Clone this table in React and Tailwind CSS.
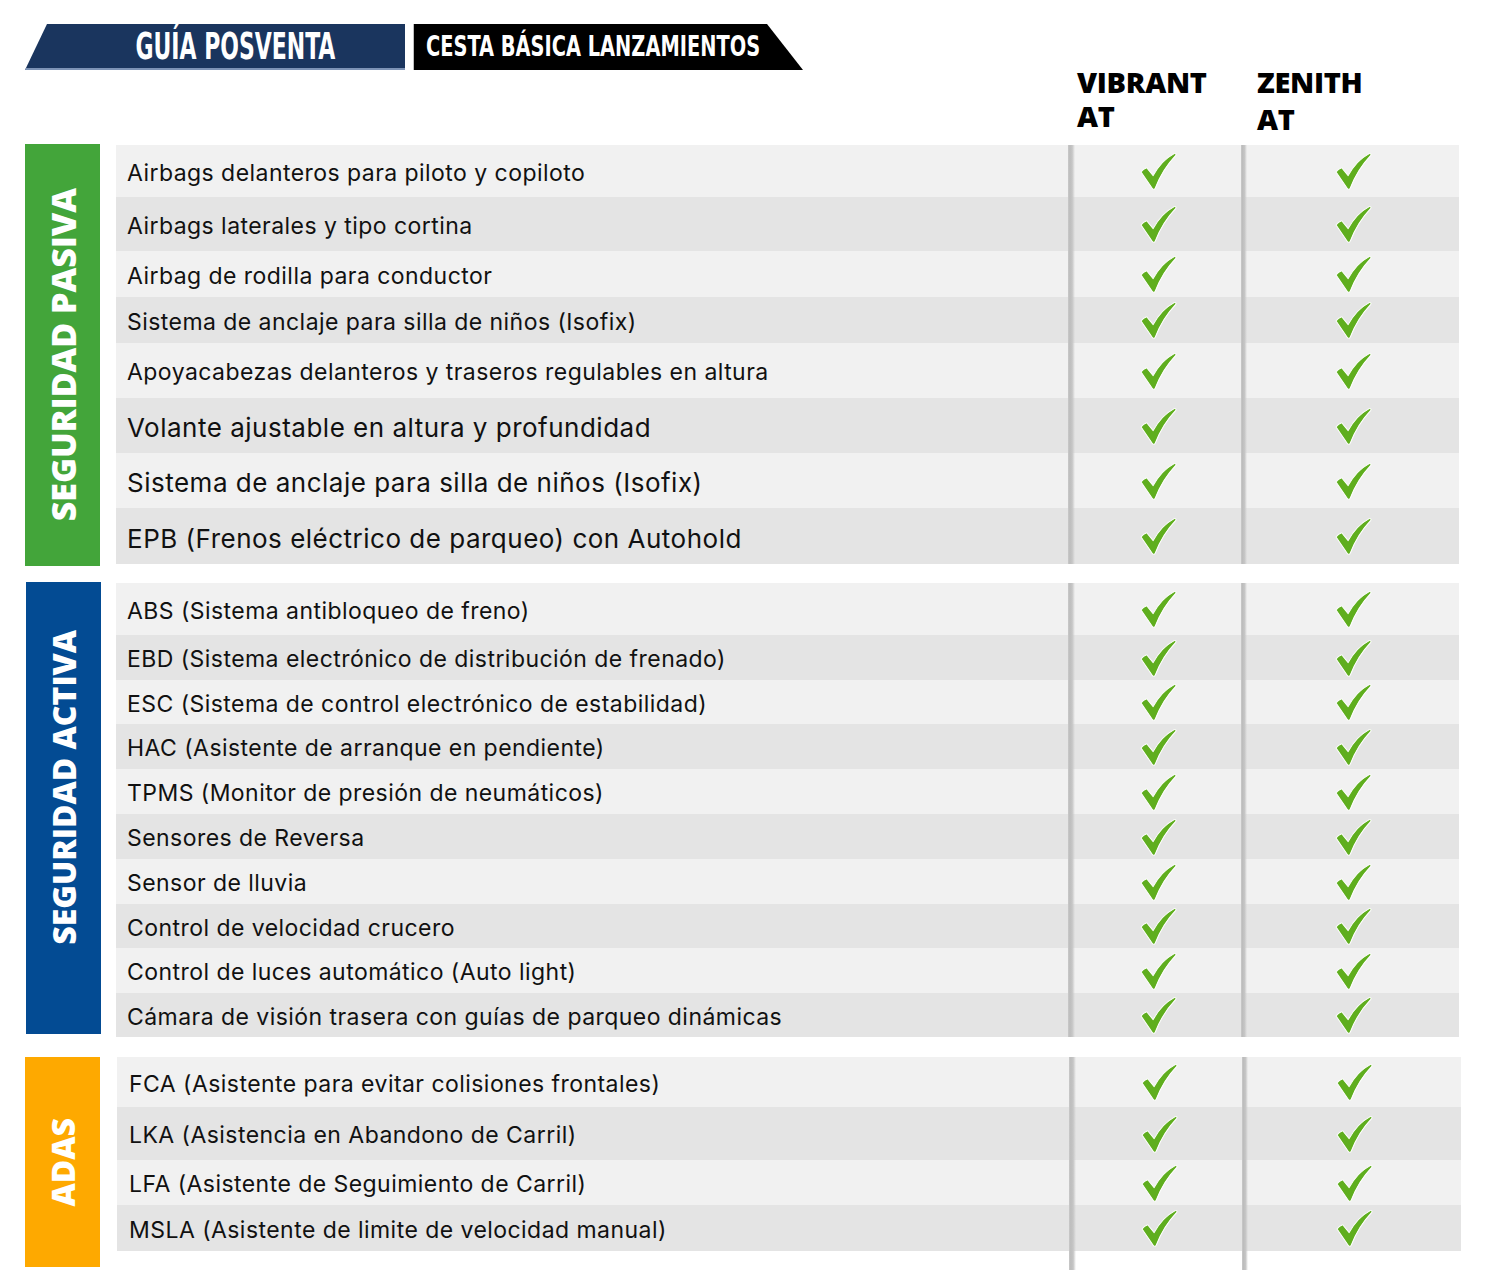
import React from "react";

const sec1 = [
  { t: "Airbags delanteros para piloto y copiloto", h: "h-[52px]" },
  { t: "Airbags laterales y tipo cortina", h: "h-[54px]" },
  { t: "Airbag de rodilla para conductor", h: "h-[46px]" },
  { t: "Sistema de anclaje para silla de niños (Isofix)", h: "h-[46px]" },
  { t: "Apoyacabezas delanteros y traseros regulables en altura", h: "h-[55px]" },
  { t: "Volante ajustable en altura y profundidad", h: "h-[55px]", big: true },
  { t: "Sistema de anclaje para silla de niños (Isofix)", h: "h-[55px]", big: true },
  { t: "EPB (Frenos eléctrico de parqueo) con Autohold", h: "h-[56px]", big: true },
];

const sec2 = [
  { t: "ABS (Sistema antibloqueo de freno)", h: "h-[52px]" },
  { t: "EBD (Sistema electrónico de distribución de frenado)", h: "h-[45px]" },
  { t: "ESC (Sistema de control electrónico de estabilidad)", h: "h-[44px]" },
  { t: "HAC (Asistente de arranque en pendiente)", h: "h-[45px]" },
  { t: "TPMS (Monitor de presión de neumáticos)", h: "h-[45px]" },
  { t: "Sensores de Reversa", h: "h-[45px]" },
  { t: "Sensor de lluvia", h: "h-[45px]" },
  { t: "Control de velocidad crucero", h: "h-[44px]" },
  { t: "Control de luces automático (Auto light)", h: "h-[45px]" },
  { t: "Cámara de visión trasera con guías de parqueo dinámicas", h: "h-[44px]" },
];

const sec3 = [
  { t: "FCA (Asistente para evitar colisiones frontales)", h: "h-[50px]" },
  { t: "LKA (Asistencia en Abandono de Carril)", h: "h-[53px]" },
  { t: "LFA (Asistente de Seguimiento de Carril)", h: "h-[45px]" },
  { t: "MSLA (Asistente de limite de velocidad manual)", h: "h-[46px]" },
];

function Check() {
  return (
    <svg width="37" height="38" viewBox="0 0 36 37">
      <path
        d="M1 19.5 C2.5 17.5 4.5 16 6.5 15.3 L12.8 23 C18 13.5 25 6 33.3 1.6 C34.8 1 35.6 2.4 34.6 3.5 C26.5 12 19.5 23 14.8 35.3 C14.2 36.6 12.6 36.6 12 35.5 Z"
        fill="#5fae1e"
        stroke="#ffffff"
        strokeWidth="1"
        strokeLinejoin="round"
      />
    </svg>
  );
}

function Sep() {
  return (
    <div className="w-[7px] shrink-0 self-stretch bg-[linear-gradient(to_right,#c9c9c9,#bdbdbd_25%,#c6c6c6_60%,rgba(200,200,200,0))]" />
  );
}

function Sep2() {
  return (
    <div className="w-[6px] shrink-0 self-stretch bg-[linear-gradient(to_right,#c9c9c9,#bdbdbd_25%,#c6c6c6_60%,rgba(200,200,200,0))]" />
  );
}

function Row({ r, i, pl }) {
  return (
    <div className={`flex ${r.h} ${i % 2 ? "bg-[#e4e4e4]" : "bg-[#f1f1f1]"}`}>
      <div
        className={`w-[952px] shrink-0 flex items-center pt-[4px] ${pl} ${
          r.big ? "text-[26px] tracking-[0.5px]" : "text-[23px] tracking-[0.45px]"
        } text-[#111111] font-['Inter',sans-serif] whitespace-nowrap`}
      >
        {r.t}
      </div>
      <Sep />
      <div className="w-[166px] shrink-0 flex items-center justify-center">
        <Check />
      </div>
      <Sep2 />
      <div className="w-[212px] shrink-0 flex items-center justify-center">
        <Check />
      </div>
    </div>
  );
}

export default function App() {
  return (
    <div className="w-[1492px] h-[1282px] bg-white overflow-hidden">
      {/* top area */}
      <div className="flex h-[144px]">
        <div className="flex w-[1077px] shrink-0 pl-[25px] pt-[24px] items-start">
          <div className="w-[380px] h-[46px] bg-[#1a355e] border-b-2 border-[#7d93b6] [clip-path:polygon(22px_0,100%_0,100%_100%,0_100%)] flex items-center justify-center pl-[40px]">
            <span className="inline-block whitespace-nowrap font-['Liberation_Sans_Narrow','DejaVu_Sans_Condensed',sans-serif] font-bold text-white text-[37px] leading-none scale-x-[0.66]">
              GUÍA POSVENTA
            </span>
          </div>
          <div className="ml-[8px] w-[390px] h-[46px] bg-black border-l border-[#bfbfbf] [clip-path:polygon(0_0,calc(100%-36px)_0,100%_100%,0_100%)] flex items-center pl-[12px] overflow-visible">
            <span className="inline-block whitespace-nowrap origin-left font-['Liberation_Sans_Narrow','DejaVu_Sans_Condensed',sans-serif] font-bold text-white text-[28px] leading-none scale-x-[0.77]">
              CESTA BÁSICA LANZAMIENTOS
            </span>
          </div>
        </div>
        <div className="w-[180px] shrink-0 pt-[65px] font-['Open_Sans',sans-serif] font-extrabold text-[29px] leading-[34px] text-black tracking-[-0.3px]">
          <div>VIBRANT</div>
          <div>AT</div>
        </div>
        <div className="shrink-0 pt-[63px] font-['Open_Sans',sans-serif] font-extrabold text-[29px] leading-[37px] text-black tracking-[-0.3px]">
          <div>ZENITH</div>
          <div>AT</div>
        </div>
      </div>

      {/* Section 1 */}
      <div className="flex items-start pl-[25px]">
        <div className="w-[75px] h-[422px] shrink-0 bg-[#43a53a] flex items-center justify-center">
          <span className="[writing-mode:vertical-rl] rotate-180 text-white font-extrabold text-[34px] leading-none font-['Open_Sans',sans-serif] whitespace-nowrap">
            SEGURIDAD PASIVA
          </span>
        </div>
        <div className="ml-[16px] mt-[1px] w-[1343px] flex flex-col">
          {sec1.map((r, i) => (
            <Row key={i} r={r} i={i} pl="pl-[11px]" />
          ))}
        </div>
      </div>

      {/* Section 2 */}
      <div className="flex items-start pl-[26px] mt-[16px]">
        <div className="w-[75px] h-[452px] shrink-0 bg-[#034b93] flex items-center justify-center pb-[42px]">
          <span className="[writing-mode:vertical-rl] rotate-180 text-white font-extrabold text-[32px] leading-none font-['Open_Sans',sans-serif] whitespace-nowrap">
            SEGURIDAD ACTIVA
          </span>
        </div>
        <div className="ml-[15px] mt-[1px] w-[1343px] flex flex-col">
          {sec2.map((r, i) => (
            <Row key={i} r={r} i={i} pl="pl-[11px]" />
          ))}
        </div>
      </div>

      {/* Section 3 */}
      <div className="flex items-start pl-[25px] mt-[20px]">
        <div className="w-[75px] h-[210px] shrink-0 bg-[#fea900] flex items-center justify-center">
          <span className="[writing-mode:vertical-rl] rotate-180 text-white font-extrabold text-[32px] leading-none font-['Open_Sans',sans-serif] whitespace-nowrap">
            ADAS
          </span>
        </div>
        <div className="ml-[17px] w-[1344px] flex flex-col">
          {sec3.map((r, i) => (
            <Row key={i} r={r} i={i} pl="pl-[12px]" />
          ))}
          <div className="flex h-[19px]">
            <div className="w-[952px] shrink-0" />
            <Sep />
            <div className="w-[166px] shrink-0" />
            <Sep2 />
          </div>
        </div>
      </div>
    </div>
  );
}
